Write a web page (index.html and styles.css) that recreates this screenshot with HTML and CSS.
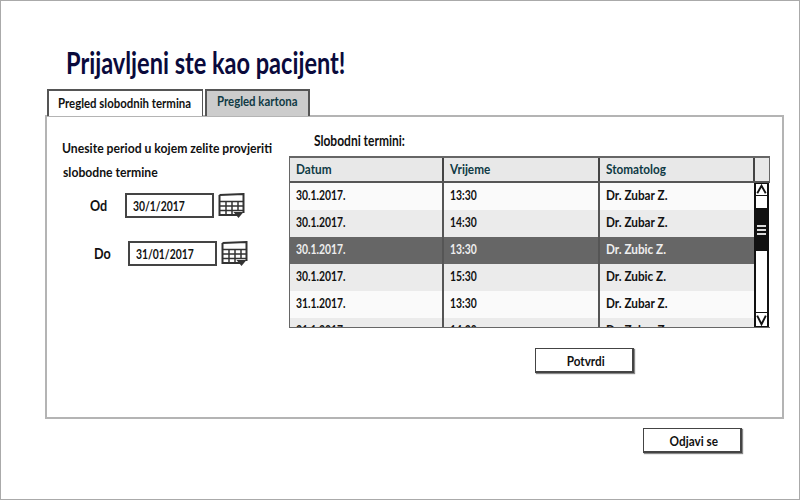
FILE: index.html
```html
<!DOCTYPE html>
<html>
    <head>
        <meta charset="UTF-8">
        <title>Prijavljeni ste kao pacijent</title>
        <link rel="stylesheet" href="styles.css">
    </head>
    <body>
        <div class="frame">
            <h1>Prijavljeni ste kao pacijent!</h1>
            <div class="tabs">
                <div class="tab tab-active"><span class="sq">Pregled slobodnih termina</span></div>
                <div class="tab tab-other"><span class="sq">Pregled kartona</span></div>
            </div>
            <div class="panel">
                <div class="left">
                    <p class="intro sq">Unesite period u kojem zelite provjeriti</p>
                    <p class="intro intro-second sq">slobodne termine</p>
                    <div class="date-row">
                        <span class="date-label sq">Od</span>
                        <div class="date-input"><span class="sq num">30/1/2017</span></div>
                        <svg class="cal" width="27" height="25" viewBox="0 0 27 25">
                            <path d="M1.5 2 L25.5 1 L25.5 20 M1.5 2 L1.5 22 L19 22" fill="none" stroke="#333" stroke-width="2"/>
                            <path d="M1.5 8.5 H25.5 M1.5 13 H25.5 M1.5 17.5 H25.5 M8 8.5 V22 M14 8.5 V22 M20 8.5 V18" fill="none" stroke="#333" stroke-width="1.5"/>
                            <path d="M15.5 19 H25.5 L20.5 25 Z" fill="#333"/>
                        </svg>
                    </div>
                    <div class="date-row date-row-do">
                        <span class="date-label sq">Do</span>
                        <div class="date-input"><span class="sq num">31/01/2017</span></div>
                        <svg class="cal" width="27" height="25" viewBox="0 0 27 25">
                            <path d="M1.5 2 L25.5 1 L25.5 20 M1.5 2 L1.5 22 L19 22" fill="none" stroke="#333" stroke-width="2"/>
                            <path d="M1.5 8.5 H25.5 M1.5 13 H25.5 M1.5 17.5 H25.5 M8 8.5 V22 M14 8.5 V22 M20 8.5 V18" fill="none" stroke="#333" stroke-width="1.5"/>
                            <path d="M15.5 19 H25.5 L20.5 25 Z" fill="#333"/>
                        </svg>
                    </div>
                </div>
                <div class="right">
                    <p class="table-title sq">Slobodni termini:</p>
                    <div class="table">
                        <div class="table-head">
                            <div class="head-cell"><span class="sq">Datum</span></div>
                            <div class="head-cell"><span class="sq">Vrijeme</span></div>
                            <div class="head-cell"><span class="sq">Stomatolog</span></div>
                            <div class="head-cell"></div>
                        </div>
                        <div class="table-body">
                            <div class="rows">
                                <div class="row"><span class="sq num">30.1.2017.</span><span class="sq num">13:30</span><span class="sq">Dr. Zubar Z.</span></div>
                                <div class="row row-alt"><span class="sq num">30.1.2017.</span><span class="sq num">14:30</span><span class="sq">Dr. Zubar Z.</span></div>
                                <div class="row row-selected"><span class="sq num">30.1.2017.</span><span class="sq num">13:30</span><span class="sq">Dr. Zubic Z.</span></div>
                                <div class="row row-alt"><span class="sq num">30.1.2017.</span><span class="sq num">15:30</span><span class="sq">Dr. Zubic Z.</span></div>
                                <div class="row"><span class="sq num">31.1.2017.</span><span class="sq num">13:30</span><span class="sq">Dr. Zubar Z.</span></div>
                                <div class="row row-alt"><span class="sq num">31.1.2017.</span><span class="sq num">14:30</span><span class="sq">Dr. Zubar Z.</span></div>
                            </div>
                            <div class="scrollbar">
                                <svg class="arrow" width="11" height="13" viewBox="0 0 11 13"><path d="M0.5 11 L5.5 2 L10.5 11" fill="none" stroke="#111" stroke-width="2.2"/></svg>
                                <div class="scroll-gap"></div>
                                <div class="scroll-thumb"><i></i><i></i><i></i></div>
                                <div class="scroll-track"></div>
                                <svg class="arrow" width="11" height="15" viewBox="0 0 11 15"><path d="M0.5 3 L5.5 13 L10.5 3" fill="none" stroke="#111" stroke-width="2.2"/></svg>
                            </div>
                        </div>
                    </div>
                    <div class="confirm-row">
                        <button class="btn"><span class="sq">Potvrdi</span></button>
                    </div>
                </div>
            </div>
            <div class="logout-row">
                <button class="btn"><span class="sq">Odjavi se</span></button>
            </div>
        </div>
    </body>
</html>
```

FILE: styles.css
```css
* {
    box-sizing: border-box;
}
body {
    margin: 0;
    font-family: Lato, sans-serif;
    color: #111;
    background-color: white;
}
p {
    margin: 0;
}
/* no narrow font is installed, so text is squeezed sideways */
.sq {
    display: inline-block;
    white-space: nowrap;
    transform: scaleX(0.84);
    transform-origin: left center;
}
.num {
    transform: scaleX(0.74);
}
.frame {
    width: 800px;
    height: 500px;
    border: 1px solid #aaa;
    padding: 45px 0 0 44px;
    overflow: hidden;
}
h1 {
    margin: 0 0 0 21px;
    height: 43px;
    font-size: 30px;
    line-height: 33px;
    font-weight: bold;
    color: #0a0a3c;
    white-space: nowrap;
    transform: scaleX(0.785);
    transform-origin: left center;
}
.tabs {
    display: flex;
    gap: 2px;
    margin-left: 2px;
    height: 26px;
}
.tab {
    height: 27px;
    padding-left: 9px;
    font-size: 14px;
    font-weight: bold;
    line-height: 23px;
    position: relative;
    white-space: nowrap;
}
.tab .sq {
    transform: scaleX(0.815);
}
.tab-active {
    width: 156px;
    background-color: white;
    border: 2px solid #555;
    border-bottom: 0;
    border-right-width: 1px;
    z-index: 1;
}
.tab-other {
    width: 105px;
    padding-left: 10px;
    background-color: #ccc;
    border: 2px solid #555;
    border-bottom: 0;
    color: #0f3a44;
    line-height: 20px;
}
.panel {
    display: flex;
    width: 739px;
    height: 304px;
    border: 2px solid #b4b4b4;
}
.left {
    width: 242px;
    padding: 21px 0 0 15px;
}
.intro {
    display: block;
    font-size: 14px;
    font-weight: bold;
    line-height: 20px;
    transform: scaleX(0.87);
}
.intro-second {
    margin: 4px 0 0 1px;
}
.date-row {
    display: flex;
    align-items: center;
    margin-top: 11px;
    padding-left: 28px;
}
.date-row-do {
    margin-top: 23px;
    padding-left: 32px;
}
.date-label {
    width: 35px;
    margin-bottom: 2px;
    font-size: 15px;
    font-weight: bold;
}
.date-row-do .date-label {
    width: 34px;
}
.date-input {
    width: 89px;
    height: 25px;
    border: 2px solid #444;
    padding-left: 6px;
    font-size: 14px;
    font-weight: bold;
    line-height: 21px;
}
.cal {
    margin-left: 4px;
}
.right {
    width: 481px;
    padding-top: 13px;
}
.table-title {
    display: block;
    margin-left: 25px;
    height: 26px;
    font-size: 15px;
    font-weight: bold;
    line-height: 20px;
    transform: scaleX(0.8);
}
.table {
    width: 481px;
    border: 1px solid #666;
    border-top-width: 2px;
    border-right: 0;
}
.table-head {
    display: grid;
    grid-template-columns: 154px 156px 155px 1fr;
    height: 25px;
    background-color: #e8e8e8;
    border-bottom: 2px solid #555;
    border-right: 1px solid #666;
}
.head-cell {
    border-right: 2px solid #444;
    padding-left: 6px;
    font-size: 14px;
    font-weight: bold;
    line-height: 21px;
    color: #0f3a44;
}
.head-cell:last-child {
    border-right: 0;
}
.table-body {
    display: flex;
    height: 144px;
    overflow: hidden;
}
.rows {
    width: 464px;
}
.row {
    display: grid;
    grid-template-columns: 154px 156px 153px;
    height: 27px;
    padding-left: 6px;
    background-color: #fafafa;
    background-image: linear-gradient(#555, #555), linear-gradient(#555, #555);
    background-size: 2px 100%;
    background-position: 152px 0, 308px 0;
    background-repeat: no-repeat;
    font-size: 14px;
    font-weight: bold;
    line-height: 24px;
}
.row-alt {
    background-color: #ebebeb;
}
.row-selected {
    background-color: #666;
    color: #eee;
}
.scrollbar {
    width: 15px;
    display: flex;
    flex-direction: column;
    align-items: center;
    background-color: white;
    border-left: 2px solid #111;
    border-right: 2px solid #111;
}
.arrow {
    flex-shrink: 0;
    border-top: 1px solid #111;
    border-bottom: 1px solid #111;
}
.scroll-gap {
    width: 100%;
    height: 12px;
}
.scroll-thumb {
    width: 100%;
    height: 43px;
    background-color: #111;
    display: flex;
    flex-direction: column;
    justify-content: center;
    align-items: center;
    gap: 2px;
}
.scroll-thumb i {
    width: 9px;
    height: 2px;
    background-color: #ddd;
}
.scroll-track {
    flex: 1;
}
.confirm-row {
    margin: 20px 0 0 246px;
}
.btn {
    display: block;
    width: 99px;
    height: 25px;
    padding: 0 0 0 3px;
    background-color: white;
    border: 2px solid #444;
    border-top-width: 1px;
    border-left-width: 1px;
    box-shadow: 1px 1px 1px #888;
    font-family: inherit;
    font-size: 14px;
    font-weight: bold;
    color: #111;
}
.btn .sq {
    transform-origin: center;
}
.logout-row {
    margin: 9px 0 0 598px;
}
```
